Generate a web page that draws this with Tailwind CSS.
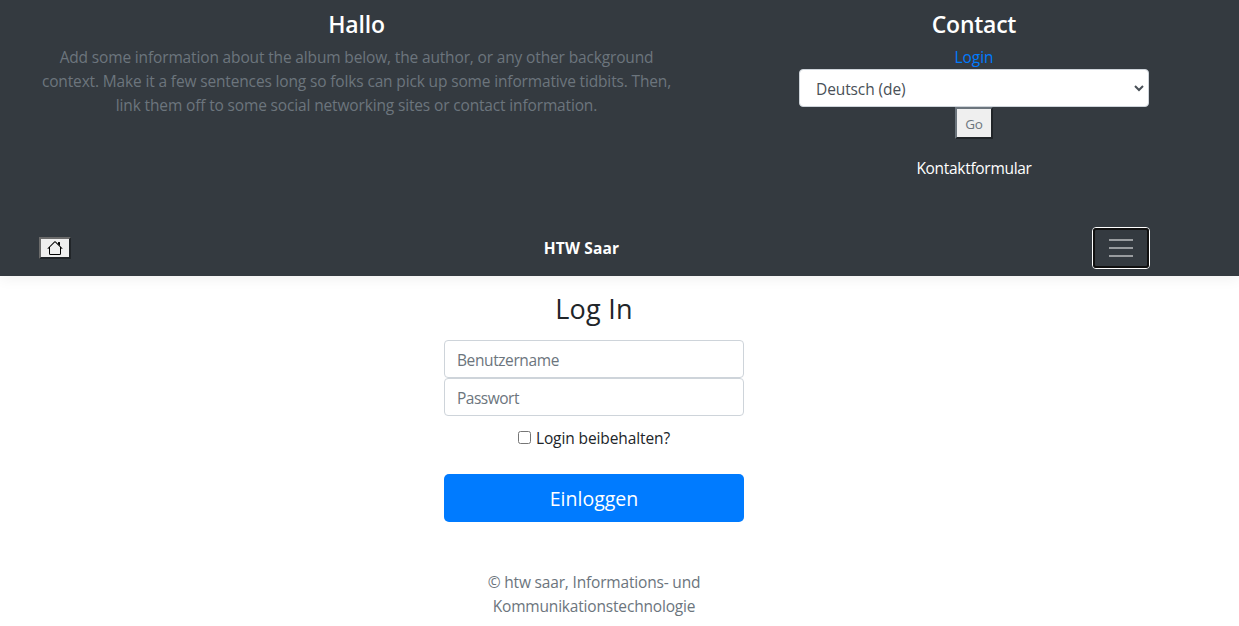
<!DOCTYPE html>
<html lang="de">
<head>
<meta charset="utf-8">
<title>HTW Saar</title>
<script src="https://cdn.jsdelivr.net/npm/@tailwindcss/browser@4"></script>
</head>
<body class="h-[626px] overflow-hidden bg-white font-['Open_Sans','Noto_Sans',sans-serif] text-[15.5px] leading-6 tracking-[-0.15px] text-[#212529]">
<header class="h-[276px] bg-[#343a40] shadow-[0_4px_12px_rgba(0,0,0,0.05)]">
  <div class="flex h-[220px] pt-[10px] text-center">
    <section class="ml-[32px] w-[649px]">
      <h4 class="mb-[6px] text-[23px] font-semibold leading-[29px] text-white"><span>Hallo</span></h4>
      <p class="whitespace-nowrap text-[#6c757d]"><span>Add some information about the album below, the author, or any other background</span><br><span>context. Make it a few sentences long so folks can pick up some informative tidbits. Then,</span><br><span>link them off to some social networking sites or contact information.</span></p>
    </section>
    <section class="ml-[118px] flex w-[350px] flex-col items-center">
      <h4 class="mb-[6px] text-[23px] font-semibold leading-[29px] tracking-[-0.25px] text-white"><span>Contact</span></h4>
      <a class="tracking-normal text-[#007bff]"><span>Login</span></a>
      <div class="flex h-[38px] w-full items-center justify-between rounded-[4px] border border-[#ced4da] bg-white pl-4 pr-[4px] pt-[2px] tracking-[-0.1px] text-[#495057]">
        <span>Deutsch (de)</span>
        <svg class="mb-[3px] h-[10px] w-[10px]" viewBox="0 0 10 10" fill="none" stroke="#495057" stroke-width="2"><path d="M1 3l4 4 4-4"/></svg>
      </div>
      <button class="h-[32px] w-[38px] border-2 border-t-[#6c757d] border-l-[#6c757d] border-r-[#212529] border-b-[#212529] bg-[#efefef] pt-[2px] text-[13.5px] leading-6 text-[#6c757d]">Go</button>
      <a class="mt-[17px] tracking-[-0.3px] text-white"><span>Kontaktformular</span></a>
    </section>
  </div>
  <div class="flex h-[56px] items-center justify-between pl-[39px] pr-[89px]">
    <button class="flex h-[22px] w-[32px] items-center justify-center border-2 border-t-[#6b6b6b] border-l-[#6b6b6b] border-r-[#212529] border-b-[#212529] bg-[#efefef]">
      <svg class="h-4 w-4" viewBox="0 0 16 16" fill="black"><path fill-rule="evenodd" d="M2 13.5V7h1v6.500a.5.5 0 0 0 .5.5h9a.5.5 0 0 0 .5-.5V7h1v6.500a1.500 1.500 0 0 1-1.500 1.500h-9A1.500 1.500 0 0 1 2 13.500zm11-11V6l-2-2V2.500a.5.5 0 0 1 .5-.5h1a.5.5 0 0 1 .5.5z"/><path fill-rule="evenodd" d="M7.293 1.500a1 1 0 0 1 1.414 0l6.647 6.646a.5.5 0 0 1-.708.708L8 2.207 1.354 8.854a.5.5 0 1 1-.708-.708L7.293 1.500z"/></svg>
    </button>
    <strong class="font-bold tracking-[0.15px] text-white"><span>HTW Saar</span></strong>
    <button class="h-[42px] w-[58px] rounded-[4px] border border-white">
      <span class="flex h-full w-full flex-col items-center justify-center gap-[6px] rounded-[3px] border-2 border-[#101010]">
        <i class="h-[2px] w-6 bg-[#999c9f]"></i><i class="h-[2px] w-6 bg-[#999c9f]"></i><i class="h-[2px] w-6 bg-[#999c9f]"></i>
      </span>
    </button>
  </div>
</header>
<main class="ml-[444px] flex w-[300px] flex-col items-center pt-[16px] text-center">
  <h1 class="mb-[14px] text-[27px] leading-[34px] tracking-[0.25px]"><span>Log In</span></h1>
  <div class="flex h-[38px] w-full items-center rounded-[4px] border border-[#ced4da] pl-3 pt-[2px] tracking-[-0.4px] text-[#6c757d]"><span>Benutzername</span></div>
  <div class="flex h-[38px] w-full items-center rounded-[4px] border border-[#ced4da] pl-3 pt-[2px] tracking-[-0.5px] text-[#6c757d]"><span>Passwort</span></div>
  <label class="mt-[10px] flex items-center gap-[5px] tracking-[-0.1px]"><i class="mb-[1px] h-[13px] w-[13px] rounded-[2.5px] border border-[#767676] bg-white"></i><span>Login beibehalten?</span></label>
  <button class="mt-[24px] h-[48px] w-full rounded-[5px] bg-[#007bff] pt-[2px] text-[19.5px] tracking-normal text-white"><span>Einloggen</span></button>
  <p class="mt-[48px] whitespace-nowrap tracking-[-0.18px] text-[#6c757d]"><span>© htw saar, Informations- und</span><br><span>Kommunikationstechnologie</span></p>
</main>
</body>
</html>
